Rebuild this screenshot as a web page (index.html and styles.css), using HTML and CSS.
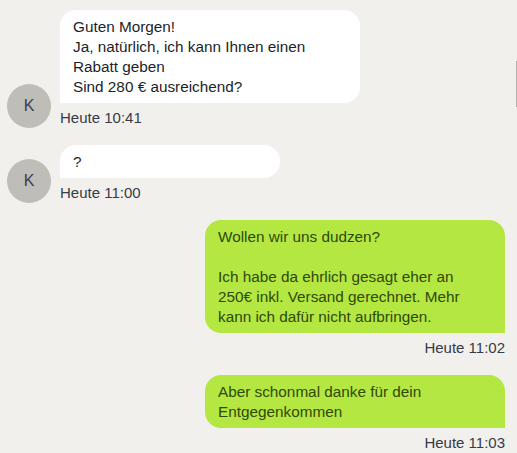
FILE: index.html
```html
<!DOCTYPE html>
<html lang="de">
<head>
<meta charset="utf-8">
<link rel="stylesheet" href="styles.css">
</head>
<body>
<div class="chat">
  <div class="row in">
    <div class="avatar">K</div>
    <div class="group">
      <div class="bubble white">Guten Morgen!<br>Ja, natürlich, ich kann Ihnen einen Rabatt geben<br>Sind 280 € ausreichend?</div>
      <div class="time">Heute 10:41</div>
    </div>
  </div>
  <div class="row in">
    <div class="avatar">K</div>
    <div class="group">
      <div class="bubble white short">?</div>
      <div class="time">Heute 11:00</div>
    </div>
  </div>
  <div class="row out">
    <div class="group">
      <div class="bubble green">Wollen wir uns dudzen?<br><br>Ich habe da ehrlich gesagt eher an 250€ inkl. Versand gerechnet. Mehr kann ich dafür nicht aufbringen.</div>
      <div class="time">Heute 11:02</div>
    </div>
  </div>
  <div class="row out">
    <div class="group">
      <div class="bubble green">Aber schonmal danke für dein Entgegenkommen</div>
      <div class="time">Heute 11:03</div>
    </div>
  </div>
</div>
<div class="scroll-thumb"></div>
</body>
</html>
```
FILE: styles.css
```css
html, body {
  margin: 0;
  padding: 0;
  background: #f2f0ed;
  font-family: "Liberation Sans", Arial, sans-serif;
  overflow: hidden;
}
.chat {
  display: flex;
  flex-direction: column;
  gap: 17px;
  padding: 10px 12px 0 7px;
}
.row {
  display: flex;
  align-items: flex-end;
  gap: 9px;
}
.row.out {
  justify-content: flex-end;
}
.avatar {
  width: 44px;
  height: 44px;
  flex: none;
  border-radius: 50%;
  background: #bfbdb8;
  color: #3b404c;
  font-size: 16px;
  display: flex;
  align-items: center;
  justify-content: center;
}
.group {
  display: flex;
  flex-direction: column;
}
.row.out .group {
  align-items: flex-end;
}
.bubble {
  box-sizing: border-box;
  max-width: 300px;
  padding: 7px 18px 6px 13px;
  font-size: 15.3px;
  line-height: 20px;
}
.bubble.white {
  background: #ffffff;
  color: #1c1f2a;
  border-radius: 16px 16px 16px 0;
}
.bubble.short {
  width: 220px;
}
.bubble.green {
  width: 300px;
  background: #b5e743;
  color: #2e4a08;
  border-radius: 16px 16px 0 16px;
}
.time {
  margin-top: 5px;
  font-size: 15px;
  line-height: 20px;
  color: #363b47;
}
.scroll-thumb {
  position: absolute;
  right: 0;
  top: 61px;
  width: 1px;
  height: 46px;
  background: #b4b2ae;
}
```
